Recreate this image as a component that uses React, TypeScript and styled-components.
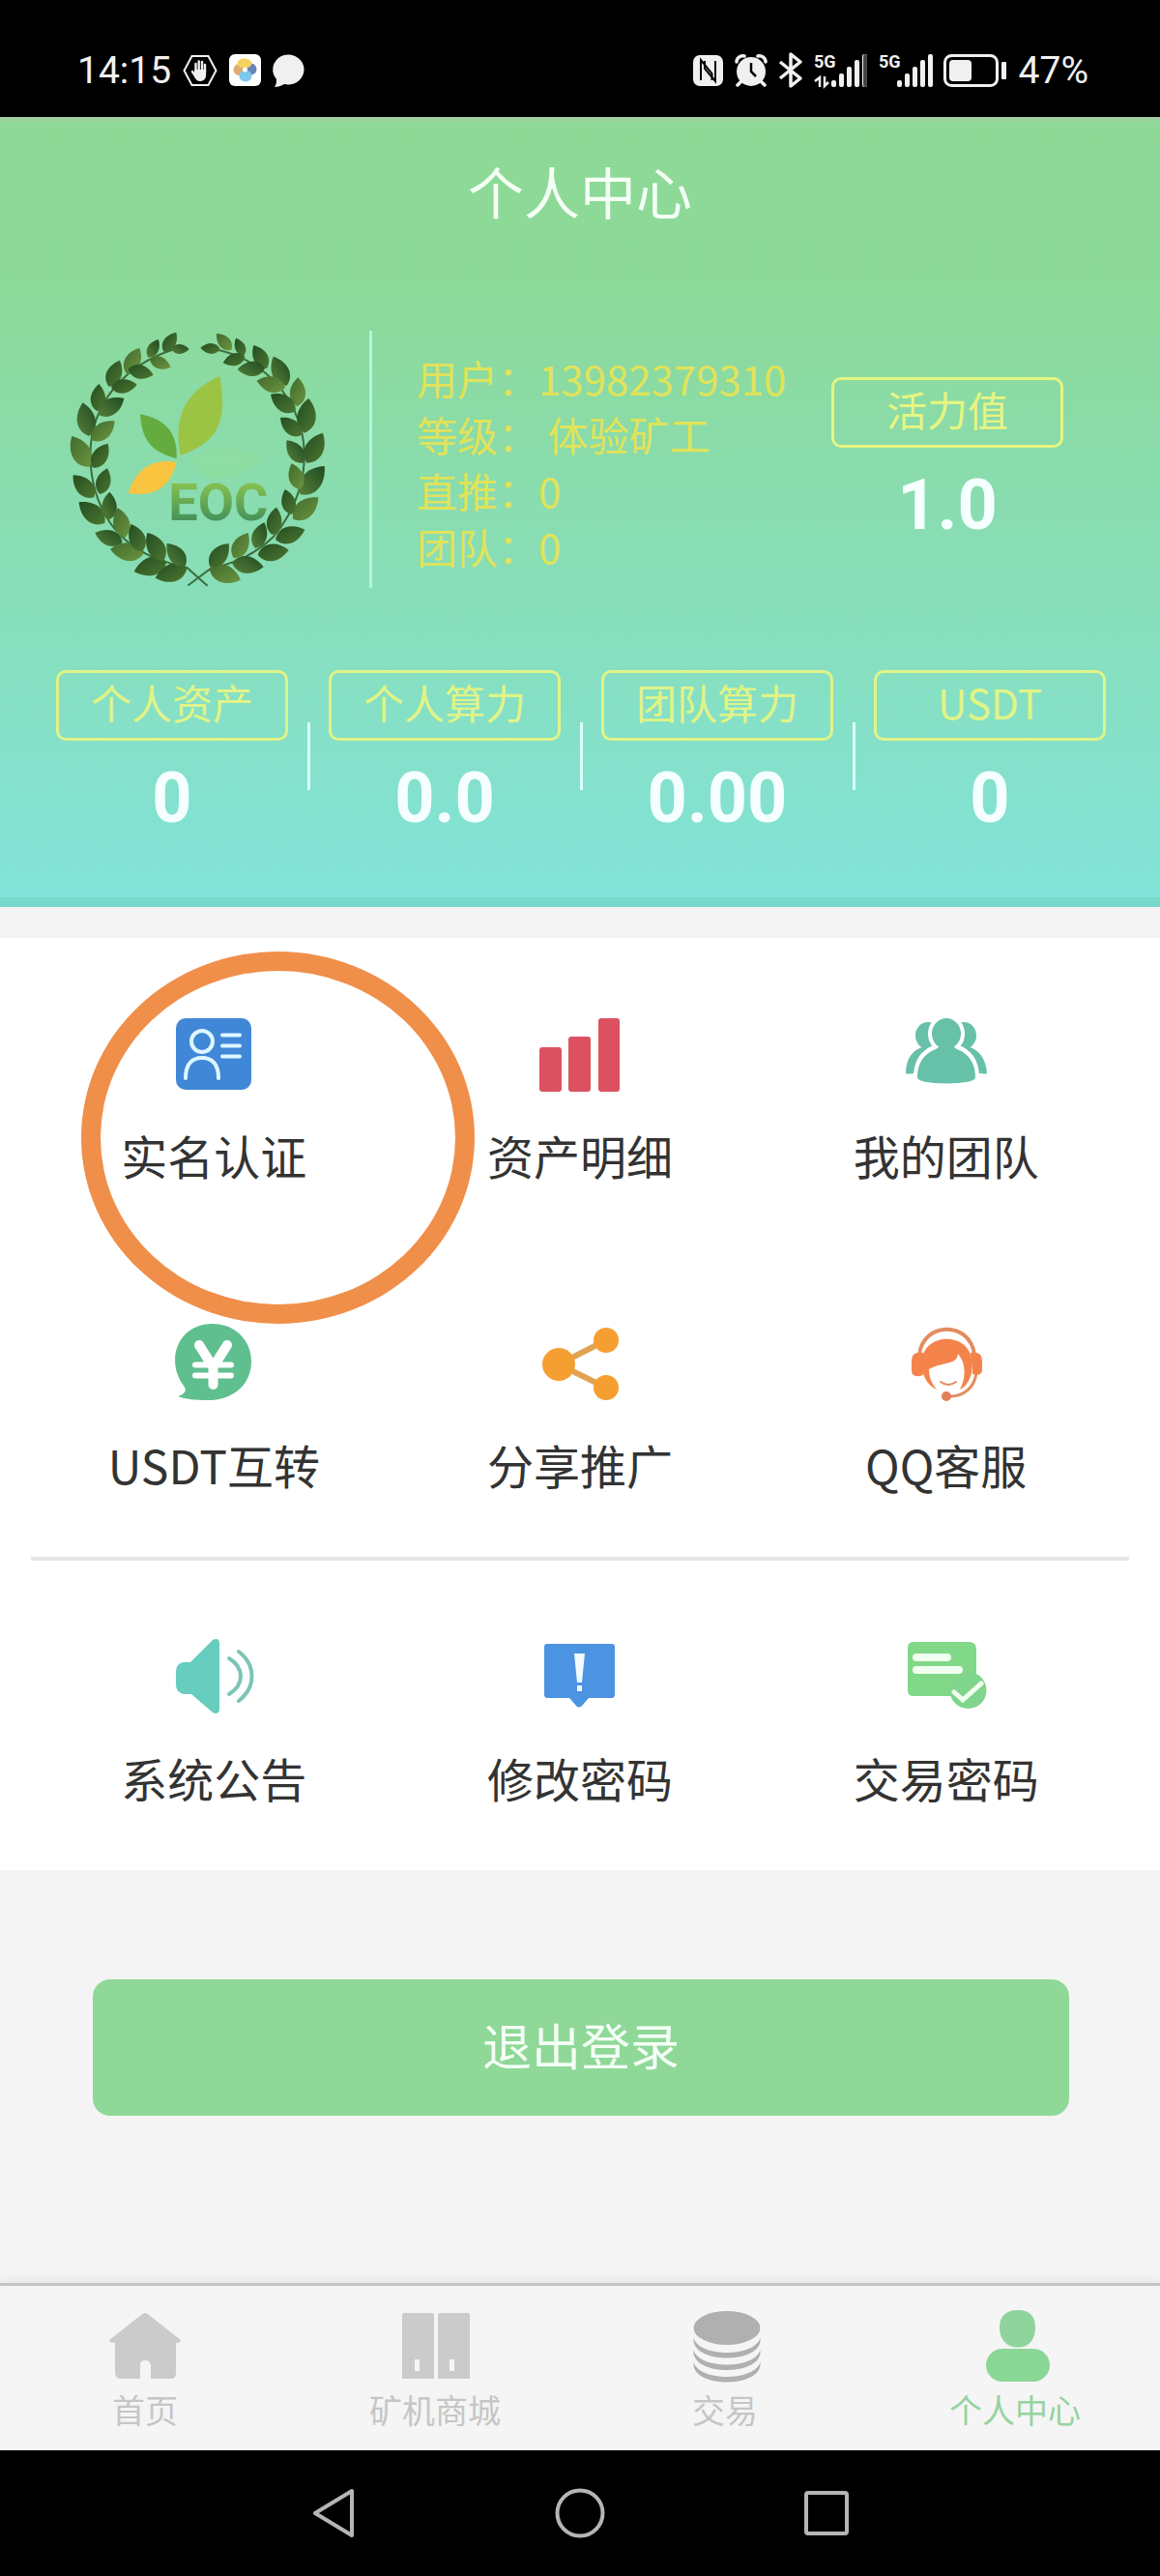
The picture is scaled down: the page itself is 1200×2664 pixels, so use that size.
import React from "react";
import styled, { createGlobalStyle } from "styled-components";

const GlobalStyle = createGlobalStyle`
  *, *::before, *::after { box-sizing: border-box; }
  body {
    margin: 0;
    background: #f4f4f4;
    font-family: "Noto Sans CJK SC", "Noto Sans", sans-serif;
  }
  a { color: inherit; text-decoration: none; }
  button { font: inherit; border: 0; padding: 0; cursor: pointer; }
  svg { display: block; overflow: visible; flex: none; }
`;

const Page = styled.div`
  min-height: 100vh;
  display: flex;
  flex-direction: column;
`;

/* ---------- status bar ---------- */

const StatusBar = styled.div`
  display: flex;
  justify-content: space-between;
  align-items: center;
  height: 121px;
  padding: 24px 74px 0 80px;
  background: #000;
  color: #f0f0f0;
  font-family: Roboto, sans-serif;
  font-size: 39px;
  line-height: 48px;
`;

const StatusGroup = styled.div`
  display: flex;
  align-items: center;
  gap: 12px;
`;

/* ---------- header ---------- */

const Header = styled.header`
  padding-bottom: 68px;
  background: linear-gradient(#8ed996 0%, #8dd998 20%, #82e3da 100%);
  box-shadow: inset 0 -10px 0 #78d8cc;
  border-top: 4px solid #a3cfa4;
`;

const Title = styled.h1`
  margin: 0;
  padding-top: 32px;
  font-size: 58px;
  line-height: 80px;
  font-weight: 400;
  text-align: center;
  color: #f4fff6;
`;

const Profile = styled.section`
  display: flex;
  align-items: flex-start;
  margin-top: 105px;
  padding: 0 100px 0 70px;
`;

const ProfileRule = styled.div`
  align-self: stretch;
  width: 3px;
  margin: 0 46px 0 44px;
  background: #b4f5dc;
`;

const InfoList = styled.dl`
  margin: 20px 0 0;
  color: #e0e35a;
  font-size: 42px;
  line-height: 58px;
  font-weight: 400;
  white-space: pre;
`;

const InfoRow = styled.div`
  display: flex;
`;

const InfoTerm = styled.dt``;

const InfoValue = styled.dd`
  margin: 0;
`;

const Metric = styled.div`
  display: flex;
  flex-direction: column;
  align-items: center;
  gap: 16px;
`;

const VitalitySlot = styled.div`
  margin: 48px 0 0 auto;
`;

const MetricLabel = styled.span<{ $color: string }>`
  display: flex;
  align-items: center;
  justify-content: center;
  width: 240px;
  height: 73px;
  border: 3px solid ${(p) => p.$color};
  border-radius: 10px;
  padding-bottom: 8px;
  color: ${(p) => p.$color};
  font-size: 42px;
  line-height: 58px;
`;

const MetricValue = styled.strong`
  color: #f6ffff;
  font-family: Roboto, sans-serif;
  font-size: 72px;
  line-height: 88px;
  font-weight: 700;
`;

const Stats = styled.section`
  display: flex;
  align-items: center;
  justify-content: space-between;
  margin-top: 85px;
  padding: 0 56px 0 58px;
`;

const StatRule = styled.div`
  width: 3px;
  height: 70px;
  background: #dcfffa;
`;

/* ---------- menu ---------- */

const Main = styled.main`
  flex: 1;
`;

const Panel = styled.nav`
  margin-top: 32px;
  padding: 0 32px;
  background: #fff;
`;

const Grid = styled.div`
  display: grid;
  grid-template-columns: repeat(3, 1fr);
`;

const PanelRule = styled.hr`
  height: 4px;
  margin: 0;
  border: 0;
  background: #e6e6e6;
`;

const Tile = styled.a`
  position: relative;
  display: flex;
  flex-direction: column;
  align-items: center;
  gap: 28px;
  padding: 80px 0 64px;
  color: #333;
  font-size: 48px;
  line-height: 64px;
`;

const Ring = styled.span`
  position: absolute;
  left: 52px;
  top: 14px;
  width: 407px;
  height: 385px;
  border: 20px solid #f08f4a;
  border-radius: 50%;
  pointer-events: none;
`;

const LogoutArea = styled.div`
  padding: 113px 94px 173px 96px;
`;

const LogoutButton = styled.button`
  display: block;
  width: 100%;
  height: 141px;
  border-radius: 18px;
  padding-bottom: 8px;
  background: #8fd898;
  color: #f4fff6;
  font-size: 51px;
  line-height: 72px;
`;

/* ---------- bottom bars ---------- */

const TabBar = styled.nav`
  display: grid;
  grid-template-columns: repeat(4, 1fr);
  border-top: 3px solid #c4c4c4;
  background: #f5f5f5;
  box-shadow: 0 -4px 8px rgba(0, 0, 0, 0.05);
`;

const Tab = styled.a<{ $active?: boolean }>`
  display: flex;
  flex-direction: column;
  align-items: center;
  gap: 6px;
  padding: 24px 0 20px;
  color: ${(p) => (p.$active ? "#95d3a0" : "#c6c6c6")};
  font-size: 34px;
  line-height: 44px;
`;

const SystemNav = styled.div`
  display: flex;
  align-items: center;
  justify-content: center;
  gap: 203px;
  height: 130px;
  background: #000;
`;

const SystemButton = styled.button`
  background: none;
`;

/* ---------- logo ---------- */

type Leaf = [number, number, number, number];

/* Each leaf runs from its base on the stem to its tip. */
const LEAVES: Leaf[] = [
  [388, 160, 427, 100], [340, 178, 372, 122], [272, 228, 313, 148], [218, 268, 252, 187],
  [182, 345, 187, 260], [157, 422, 137, 318], [157, 518, 103, 422], [172, 612, 107, 543],
  [205, 692, 125, 627], [260, 752, 175, 722], [325, 788, 222, 772], [397, 812, 296, 842],
  [460, 832, 362, 862],
  [412, 152, 467, 152], [345, 182, 410, 208], [278, 214, 356, 232], [225, 272, 305, 262],
  [185, 355, 265, 305], [165, 435, 236, 375], [168, 520, 215, 445], [190, 602, 213, 522],
  [218, 682, 220, 595], [268, 737, 245, 645], [322, 780, 287, 695], [388, 808, 337, 722],
  [455, 825, 398, 755],
  [598, 155, 552, 104], [637, 172, 612, 118], [708, 212, 667, 140], [770, 265, 728, 175],
  [803, 330, 805, 240], [825, 412, 838, 305], [832, 505, 882, 412], [812, 603, 887, 515],
  [790, 680, 868, 612], [735, 743, 826, 712], [680, 790, 776, 775], [600, 815, 698, 828],
  [530, 832, 627, 868],
  [563, 152, 502, 148], [640, 175, 572, 195], [702, 212, 617, 215], [765, 272, 677, 250],
  [797, 345, 720, 292], [815, 420, 750, 365], [823, 505, 770, 435], [812, 588, 785, 507],
  [785, 665, 765, 587], [725, 728, 738, 643], [672, 770, 700, 690], [605, 800, 650, 722],
  [532, 828, 590, 755],
];

const LEAF_FILLS = ["url(#leafA)", "url(#leafB)", "url(#leafC)"];

function leafPath([bx, by, tx, ty]: Leaf) {
  const dx = tx - bx;
  const dy = ty - by;
  const k = 0.36;
  const at = (t: number, s: number) =>
    `${(bx + dx * t - dy * s).toFixed(1)} ${(by + dy * t + dx * s).toFixed(1)}`;
  return `M${bx} ${by} C${at(0.2, k)} ${at(0.65, k)} ${tx} ${ty} C${at(0.65, -k)} ${at(0.2, -k)} ${bx} ${by}Z`;
}

const Logo = () => (
  <svg width="268" height="266" viewBox="90 95 804 798" role="img" aria-label="EOC">
    <defs>
      <linearGradient id="leafA" x1="0" y1="0" x2="1" y2="1">
        <stop offset="0" stopColor="#244d20" />
        <stop offset="1" stopColor="#4c7731" />
      </linearGradient>
      <linearGradient id="leafB" x1="0" y1="0" x2="1" y2="1">
        <stop offset="0" stopColor="#426a2c" />
        <stop offset="1" stopColor="#6b9541" />
      </linearGradient>
      <linearGradient id="leafC" x1="1" y1="0" x2="0" y2="1">
        <stop offset="0" stopColor="#1f4a20" />
        <stop offset="1" stopColor="#56803a" />
      </linearGradient>
      <linearGradient id="word" x1="0" y1="0" x2="0" y2="1">
        <stop offset="0.2" stopColor="#84bf50" />
        <stop offset="0.8" stopColor="#45915a" />
      </linearGradient>
    </defs>
    <g fill="none" stroke="#3d6d3c" strokeWidth="6" strokeLinecap="round">
      <path d="M430 150 C310 185 195 270 165 420 C148 540 180 660 262 738 C330 800 400 815 460 830 L522 885" />
      <path d="M545 152 C660 175 770 250 815 400 C845 530 800 650 728 735 C660 800 600 815 530 836 L465 884" />
    </g>
    {LEAVES.map((leaf, i) => (
      <path key={i} d={leafPath(leaf)} fill={LEAF_FILLS[(i * 2 + (i >> 2)) % 3]} />
    ))}
    <path d="M468 505 C520 460 600 430 690 485 C660 540 570 575 510 545 C500 520 490 512 468 505Z" fill="#92dd9a" opacity="0.5" />
    <path d="M440 482 C420 380 440 290 562 235 C588 380 555 440 440 482Z" fill="#9cc444" />
    <path d="M428 492 C345 470 320 430 315 354 C400 370 432 420 428 492Z" fill="#64ac3f" />
    <path d="M428 503 C405 590 350 610 278 600 C305 510 370 492 428 503Z" fill="#f9c440" />
    <text x="403" y="684" fontFamily="Roboto, sans-serif" fontWeight="700" fontSize="162" fill="url(#word)">
      EOC
    </text>
  </svg>
);

/* ---------- status icons ---------- */

const HandIcon = () => (
  <svg width="36" height="34" viewBox="0 0 36 34">
    <path d="M9.5 2 H26.5 L34.5 17 L26.5 32 H9.5 L1.5 17Z" fill="none" stroke="#f0f0f0" strokeWidth="2" />
    <path
      d="M13.5 18 V10 M16.7 17 V7.5 M20 17 V8 M23 18 V11 M10 18 L14 24"
      stroke="#f0f0f0"
      strokeWidth="2.4"
      strokeLinecap="round"
    />
    <path d="M12.3 16 H24.2 V21 C24.2 26 21 28 18 28 C15 28 13.5 26 12 23Z" fill="#f0f0f0" />
  </svg>
);

const PhotosIcon = () => (
  <svg width="33" height="33" viewBox="0 0 33 33">
    <rect width="33" height="33" rx="6" fill="#fff" />
    <ellipse cx="10.5" cy="16" rx="6" ry="6" fill="#dcae72" />
    <ellipse cx="22.500" cy="15.500" rx="6" ry="6" fill="#6685b8" />
    <ellipse cx="16" cy="9.5" rx="7.500" ry="5" fill="#f4d35e" />
    <ellipse cx="17" cy="22.500" rx="6.5" ry="6" fill="#7cc8ee" />
    <circle cx="16.5" cy="16" r="2.5" fill="#fff" />
  </svg>
);

const BubbleIcon = () => (
  <svg width="34" height="34" viewBox="0 0 34 34">
    <path d="M17 0.5 A16.5 15.5 0 1 1 12 31 C9 33 5 34 2 34 C4 31 4 29 4 26 A16.5 15.5 0 0 1 17 0.5Z" fill="#f0f0f0" />
  </svg>
);

const NfcIcon = () => (
  <svg width="31" height="32" viewBox="0 0 31 32">
    <rect width="31" height="32" rx="7" fill="#f0f0f0" />
    <path d="M8 26 V5 L19.5 19 V26" fill="none" stroke="#000" strokeWidth="2" />
    <path d="M12 6 V14 L23 27 V6" fill="none" stroke="#000" strokeWidth="2" />
  </svg>
);

const AlarmIcon = () => (
  <svg width="34" height="34" viewBox="0 0 34 34">
    <circle cx="17" cy="18" r="15" fill="#f0f0f0" />
    <path d="M17 9 V18 L22 23" fill="none" stroke="#000" strokeWidth="2.5" />
    <path d="M2 8 C2 4 6 1 10 2 M24 2 C28 1 32 4 32 8 M7 28 L3 32 M27 28 L31 32" stroke="#f0f0f0" strokeWidth="3.5" fill="none" strokeLinecap="round" />
  </svg>
);

const BluetoothIcon = () => (
  <svg width="24" height="37" viewBox="0 0 24 37">
    <path d="M1 10 L22 27 L12 35 V2 L22 10 L1 27" fill="none" stroke="#f0f0f0" strokeWidth="3.5" strokeLinejoin="round" />
  </svg>
);

const SIGNAL_BARS = [7, 14, 21, 28, 34];

const SignalIcon = ({ weak }: { weak?: boolean }) => (
  <svg width="55" height="36" viewBox="0 0 55 36">
    <text x="0" y="15" fontFamily="Roboto, sans-serif" fontWeight="700" fontSize="18" fill="#f0f0f0">
      5G
    </text>
    {SIGNAL_BARS.map((h, i) => (
      <rect
        key={i}
        x={(weak ? 18 : 19) + i * 8}
        y={35 - h}
        width="5"
        height={h}
        rx="2"
        fill="#f0f0f0"
      />
    ))}
    {weak && <path d="M6 35 V25 L1 29 M11 24 V34 L15 30" fill="none" stroke="#f0f0f0" strokeWidth="2.5" />}
    {weak && <rect x="51" y="1" width="4" height="34" rx="2" fill="#444" />}
  </svg>
);

const BatteryIcon = () => (
  <svg width="66" height="34" viewBox="0 0 66 34">
    <rect x="1.5" y="1.5" width="54" height="31" rx="7" fill="none" stroke="#f0f0f0" strokeWidth="3" />
    <rect x="6" y="6" width="23" height="22" rx="4" fill="#f0f0f0" />
    <rect x="60" y="8" width="5" height="18" rx="1" fill="#f0f0f0" />
  </svg>
);

/* ---------- menu icons ---------- */

const MenuIcon = ({ children }: { children: React.ReactNode }) => (
  <svg width="84" height="84" viewBox="0 0 84 84" aria-hidden="true">
    {children}
  </svg>
);

const IdCardIcon = () => (
  <MenuIcon>
    <rect x="3" y="3" width="78" height="74" rx="10" fill="#4187d8" />
    <g fill="none" stroke="#dcf7ff" strokeWidth="4" strokeLinecap="round">
      <circle cx="30" cy="27" r="11" />
      <path d="M13 65 C13 50 20 44 30 44 S47 50 47 65" />
      <path d="M51 20.5 H69 M51 31.5 H69 M51 42.5 H69" />
    </g>
  </MenuIcon>
);

const BarsIcon = () => (
  <MenuIcon>
    <g fill="#dc5160">
      <rect x="0" y="33" width="23" height="46" rx="3" />
      <rect x="30" y="22" width="23" height="57" rx="3" />
      <rect x="61" y="3" width="22" height="76" rx="3" />
    </g>
  </MenuIcon>
);

const TeamIcon = () => (
  <MenuIcon>
    <g fill="#67c1a8">
      <ellipse cx="23" cy="21" rx="13" ry="14" />
      <ellipse cx="60" cy="21" rx="13" ry="14" />
      <path d="M0 60 C0 45 7 35 20 32 H63 C76 35 83 45 84 60 Q84 61 76 60 H8 Q0 61 0 60Z" />
    </g>
    <g fill="#67c1a8" stroke="#fff" strokeWidth="8">
      <ellipse cx="42" cy="19" rx="15" ry="16" />
      <path d="M32 34 C18 39 12 50 12 64 Q12 70 42 70.5 Q72 70 72 64 C72 50 66 39 52 34Z" />
    </g>
    <g fill="#67c1a8">
      <ellipse cx="42" cy="19" rx="15" ry="16" />
      <path d="M34 28 Q36 33 31 35 C18 40 12 50 12 64 Q12 70 42 70.5 Q72 70 72 64 C72 50 66 40 53 35 Q48 33 50 28Z" />
    </g>
  </MenuIcon>
);

const YenIcon = () => (
  <MenuIcon>
    <path
      d="M5 74 C12 72 15 68 11 63 C-8 38 4 -1 41 -1 C66 -1 81 18 81 38 C81 62 62 78 36 78 C24 78 12 77 5 74Z"
      fill="#5fbf8f"
    />
    <g fill="none" stroke="#fff" strokeLinecap="round" strokeLinejoin="round">
      <path d="M27 21 L41.5 44 L56 21 M41.5 44 V62" strokeWidth="10" />
      <path d="M23 41.5 H60 M23 52.5 H60" strokeWidth="6" />
    </g>
  </MenuIcon>
);

const ShareIcon = () => (
  <MenuIcon>
    <path d="M69 16 L20 41 L69 65" fill="none" stroke="#e0a352" strokeWidth="6" />
    <g fill="#f59f33">
      <circle cx="20" cy="41" r="17" />
      <circle cx="69" cy="16" r="13" />
      <circle cx="69" cy="65" r="13" />
    </g>
  </MenuIcon>
);

const SupportIcon = () => (
  <MenuIcon>
    <g fill="none" stroke="#e38c60" strokeLinecap="round">
      <path d="M14 31 C18 -4 67 -4 71 31" strokeWidth="4" />
      <path d="M46 74 C60 74 71 65 73 50" strokeWidth="3" />
      <path d="M36 59 Q44 65 52 59" strokeWidth="2" />
    </g>
    <path
      d="M17 35 C21 8 64 8 68 35 V50 C66 58 62 64 56 67 C61 58 64 42 54 30 C53 42 38 38 24 46 C24 56 28 62 32 67 C24 63 20 57 18 50Z"
      fill="#f4834b"
    />
    <path d="M18 29 Q6 27 6 37 V47 Q6 56 18 52Z M67 29 Q79 27 79 37 V46 Q79 54 69 51Z" fill="#f4834b" />
    <circle cx="42" cy="74" r="5" fill="#e2805a" />
  </MenuIcon>
);

const SpeakerIcon = () => (
  <MenuIcon>
    <path
      d="M11 25 H18 L41 2 Q48 -1 48 6 V73 Q48 80 41 77 L19 58 H11 Q3 56 3 48 V35 Q3 26 11 25Z"
      fill="#66cdbf"
    />
    <g fill="none" stroke="#7cc5b6" strokeWidth="4" strokeLinecap="round">
      <path d="M58 21 C74 31 74 48 58 58" />
      <path d="M68 14 C86 28 86 51 68 65" />
    </g>
  </MenuIcon>
);

const AlertIcon = () => (
  <MenuIcon>
    <path d="M8 6 H75 Q78 6 78 9 V58 Q78 62 75 62 H51 L44 70 Q41 73 38 70 L31 62 H8 Q5 62 5 58 V9 Q5 6 8 6Z" fill="#4c93e2" />
    <path d="M36 16 H47 L44 46 H39Z M39 49 H44 V55 H39Z" fill="#effbff" />
  </MenuIcon>
);

const CardCheckIcon = () => (
  <MenuIcon>
    <path d="M8 4 H66 Q73 5 73 11 V60 H8 Q2 60 2 54 V10 Q2 4 8 4Z" fill="#80d888" />
    <circle cx="64.5" cy="54" r="19" fill="#80d58c" />
    <g fill="none" stroke="#f0fff0" strokeLinecap="round">
      <path d="M11 20 H43 M11 33 H55" strokeWidth="8" />
      <path d="M50 56 L59 64 L78 47" strokeWidth="5" />
    </g>
  </MenuIcon>
);

/* ---------- tab icons ---------- */

const TabIcon = ({ children }: { children: React.ReactNode }) => (
  <svg width="76" height="76" viewBox="0 0 76 76" aria-hidden="true">
    {children}
  </svg>
);

const HomeIcon = () => (
  <TabIcon>
    <path
      d="M34 6 Q38 2 42 6 L75 32 Q75 35 70 35 V67 Q70 72 65 72 H44 V58 Q43 53 38 53 Q33 53 33 58 V72 H12 Q7 71 7 66 V35 Q1 35 1 32Z"
      fill="#cbcbcb"
    />
  </TabIcon>
);

const MinerIcon = () => (
  <TabIcon>
    <path
      fillRule="evenodd"
      fill="#cbcbcb"
      d="M6 4 H35 Q37 4 37 6 V72 H4 V6 Q4 4 6 4Z M17 52 V64 H22 V52Z M43 4 H72 Q74 4 74 6 V72 H41 V6 Q41 4 43 4Z M53 52 V64 H58 V52Z"
    />
  </TabIcon>
);

const CoinsIcon = () => (
  <TabIcon>
    <g fill="#b0b0b0">
      <ellipse cx="40" cy="19.5" rx="34.5" ry="17.5" />
      {[0, 12.5, 25].map((dy) => (
        <path
          key={dy}
          d={`M5.5 ${30 + dy} C12 ${50 + dy} 68 ${50 + dy} 74.5 ${30 + dy} V${34 + dy} C70 ${56 + dy} 10 ${56 + dy} 5.5 ${34 + dy}Z`}
        />
      ))}
    </g>
  </TabIcon>
);

const PersonIcon = () => (
  <TabIcon>
    <path d="M41 1 C54 1 59 8 59 19 C59 32 52 39.5 41 39.5 C30 39.5 22 32 22 19 C22 8 28 1 41 1Z" fill="#8fd49c" />
    <rect x="8" y="41" width="66" height="34" rx="17" fill="#8bd796" />
  </TabIcon>
);

/* ---------- data ---------- */

const INFO = [
  ["用户：", "13982379310"],
  ["等级：", " 体验矿工"],
  ["直推：", "0"],
  ["团队：", "0"],
];

const STATS = [
  ["个人资产", "0"],
  ["个人算力", "0.0"],
  ["团队算力", "0.00"],
  ["USDT", "0"],
];

type TileItem = { label: string; Icon: () => React.ReactElement; ring?: boolean };

const PRIMARY: TileItem[] = [
  { label: "实名认证", Icon: IdCardIcon, ring: true },
  { label: "资产明细", Icon: BarsIcon },
  { label: "我的团队", Icon: TeamIcon },
  { label: "USDT互转", Icon: YenIcon },
  { label: "分享推广", Icon: ShareIcon },
  { label: "QQ客服", Icon: SupportIcon },
];

const SECONDARY: TileItem[] = [
  { label: "系统公告", Icon: SpeakerIcon },
  { label: "修改密码", Icon: AlertIcon },
  { label: "交易密码", Icon: CardCheckIcon },
];

const TABS = [
  { label: "首页", Icon: HomeIcon },
  { label: "矿机商城", Icon: MinerIcon },
  { label: "交易", Icon: CoinsIcon },
  { label: "个人中心", Icon: PersonIcon, active: true },
];

const TileGrid = ({ items }: { items: TileItem[] }) => (
  <Grid>
    {items.map(({ label, Icon, ring }) => (
      <Tile key={label} href="#">
        <Icon />
        <span>{label}</span>
        {ring && <Ring />}
      </Tile>
    ))}
  </Grid>
);

export default function App() {
  return (
    <Page>
      <GlobalStyle />
      <StatusBar>
        <StatusGroup>
          <span>14:15</span>
          <HandIcon />
          <PhotosIcon />
          <BubbleIcon />
        </StatusGroup>
        <StatusGroup>
          <NfcIcon />
          <AlarmIcon />
          <BluetoothIcon />
          <SignalIcon weak />
          <SignalIcon />
          <BatteryIcon />
          <span>47%</span>
        </StatusGroup>
      </StatusBar>

      <Header>
        <Title>个人中心</Title>
        <Profile>
          <Logo />
          <ProfileRule />
          <InfoList>
            {INFO.map(([term, value]) => (
              <InfoRow key={term}>
                <InfoTerm>{term}</InfoTerm>
                <InfoValue>{value}</InfoValue>
              </InfoRow>
            ))}
          </InfoList>
          <VitalitySlot>
            <Metric>
              <MetricLabel $color="#e6f582">活力值</MetricLabel>
              <MetricValue>1.0</MetricValue>
            </Metric>
          </VitalitySlot>
        </Profile>
        <Stats>
          {STATS.map(([label, value], i) => (
            <React.Fragment key={label}>
              {i > 0 && <StatRule />}
              <Metric>
                <MetricLabel $color="#e0f486">{label}</MetricLabel>
                <MetricValue>{value}</MetricValue>
              </Metric>
            </React.Fragment>
          ))}
        </Stats>
      </Header>

      <Main>
        <Panel>
          <TileGrid items={PRIMARY} />
          <PanelRule />
          <TileGrid items={SECONDARY} />
        </Panel>
        <LogoutArea>
          <LogoutButton type="button">退出登录</LogoutButton>
        </LogoutArea>
      </Main>

      <TabBar>
        {TABS.map(({ label, Icon, active }) => (
          <Tab key={label} href="#" $active={active}>
            <Icon />
            <span>{label}</span>
          </Tab>
        ))}
      </TabBar>

      <SystemNav>
        <SystemButton type="button" aria-label="返回">
          <svg width="52" height="52" viewBox="0 0 52 52">
            <path d="M45 3 V49 L7 26Z" fill="none" stroke="#b5b5b5" strokeWidth="4" strokeLinejoin="round" />
          </svg>
        </SystemButton>
        <SystemButton type="button" aria-label="主屏幕">
          <svg width="52" height="52" viewBox="0 0 52 52">
            <circle cx="26" cy="26" r="23.5" fill="none" stroke="#b5b5b5" strokeWidth="4" />
          </svg>
        </SystemButton>
        <SystemButton type="button" aria-label="最近任务">
          <svg width="52" height="52" viewBox="0 0 52 52">
            <rect x="5" y="5" width="42" height="42" rx="2" fill="none" stroke="#b5b5b5" strokeWidth="4" />
          </svg>
        </SystemButton>
      </SystemNav>
    </Page>
  );
}
